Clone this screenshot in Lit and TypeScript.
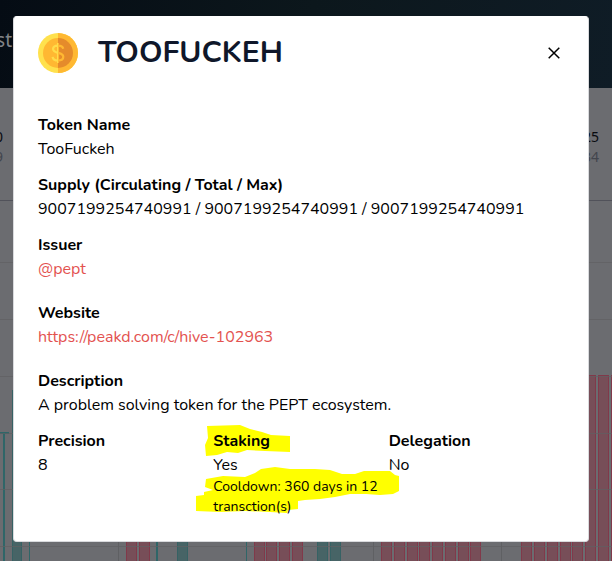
import { LitElement, html, svg, css } from "lit";
import { customElement } from "lit/decorators.js";

const GRID_ROWS = [62, 119, 176, 233, 289, 346];
const GRID_COLUMNS = [118, 373, 501];
type Bar = { x: number; w: number; top: number; tone: string };
const run = (xs: number[], w: number, top: number, tone: string): Bar[] =>
  xs.map((x) => ({ x, w, top, tone }));
const BARS: Bar[] = [
  ...run([12], 10, 190, "teal"),
  ...run([177, 317, 330], 11, 300, "teal"),
  ...run([126, 139, 254, 266, 279, 292], 11, 300, "red"),
  ...run([381, 394, 407, 419, 432, 445, 458, 470], 11, 300, "red"),
  ...run([521, 534, 547, 560, 572], 11, 300, "red"),
  ...run([585, 598, 611, 624, 637], 11, 175, "red"),
];
const THIN = [
  { x: 3, w: 2, top: 233 },
  { x: 29, w: 1, top: 300 },
  { x: 156, w: 2, top: 300 },
  { x: 246, w: 1, top: 300 },
];

@customElement("market-page")
export class MarketPage extends LitElement {
  static styles = css`
    :host {
      display: flex;
      flex-direction: column;
      min-height: 100vh;
      background: #6b6c70;
      overflow: hidden;
      font-family: "Noto Sans", "Open Sans", sans-serif;
    }
    .top {
      height: 88px;
      box-sizing: border-box;
      padding-top: 26px;
      background: linear-gradient(100deg, #050c14, #0c171c 50%, #0f1c26);
      color: #808387;
      font-size: 19px;
      line-height: 28px;
    }
    .cut {
      display: flex;
      justify-content: flex-end;
      white-space: nowrap;
    }
    .nav {
      width: 12px;
    }
    .stats {
      display: flex;
      justify-content: space-between;
      height: 112px;
      box-sizing: border-box;
      padding: 39px 13px 0 0;
      font-size: 14px;
      line-height: 20px;
      color: #080a0f;
    }
    .first {
      width: 3px;
    }
    .stat {
      text-align: right;
    }
    .dim {
      color: #42454d;
    }
    .chart {
      display: block;
      width: 100%;
      flex: 1 0 361px;
    }
    .grid {
      fill: #5f6063;
    }
    .axis {
      fill: #51525a;
    }
    .teal {
      fill: #476466;
      stroke: #366264;
    }
    .thin {
      fill: #2f6668;
    }
    .red {
      fill: #774e58;
      stroke: #81394a;
    }
  `;
  render() {
    return html`
      <div class="top"><div class="cut nav">st</div></div>
      <div class="stats">
        <div class="cut first"><div class="stat">0<br /><span class="dim">9</span></div></div>
        <div class="stat">0.25<br /><span class="dim">0.34</span></div>
      </div>
      <svg class="chart" aria-hidden="true">
        ${GRID_COLUMNS.map((x) => svg`<rect class="grid" x=${x} y="0" width="1" height="100%" />`)}
        ${BARS.map(
          (b) => svg`<rect class=${b.tone} x=${b.x + 0.5} y=${b.top + 0.5} width=${b.w - 1} height="900" />`
        )}
        ${THIN.map((b) => svg`<rect class="thin" x=${b.x} y=${b.top} width=${b.w} height="900" />`)}
        <rect class="thin" x="0" y="232" width="9" height="2" />
        ${GRID_ROWS.map((y) => svg`<rect class="grid" x="0" y=${y} width="100%" height="1" opacity="0.7" />`)}
        <rect class="axis" x="0" y="0" width="100%" height="1" />
      </svg>
    `;
  }
}

@customElement("token-dialog")
export class TokenDialog extends LitElement {
  static styles = css`
    :host {
      display: block;
      box-sizing: border-box;
      width: 100%;
      max-width: 576px;
      padding: 16px 24px 24px;
      background: #fff;
      border: 1px solid #d9dadd;
      border-top-color: #fff;
      border-radius: 4px;
      color: #000;
      font: 16px/24px Nunito, "Noto Sans", sans-serif;
    }
    header {
      display: flex;
      align-items: center;
      height: 40px;
      margin-bottom: 40px;
    }
    .coin {
      width: 40px;
      height: 40px;
      margin-right: 20px;
    }
    h2 {
      flex: 1;
      margin: 0;
      font-size: 30px;
      line-height: 40px;
      font-weight: 700;
      color: #0f172a;
    }
    .close {
      display: flex;
      align-items: center;
      justify-content: center;
      width: 20px;
      height: 40px;
      padding: 0;
      border: 0;
      background: none;
      color: #000;
    }
    dl,
    dd {
      margin: 0;
    }
    .item {
      margin-bottom: 12px;
    }
    .spaced {
      margin-bottom: 20px;
    }
    dt {
      font-weight: 700;
    }
    a {
      color: #e3524f;
      text-decoration: none;
    }
    .columns {
      display: grid;
      grid-template-columns: repeat(3, 1fr);
    }
    .column {
      position: relative;
    }
    .column dt,
    .column dd {
      position: relative;
    }
    .marker {
      position: absolute;
      left: -23px;
      top: -9px;
      width: 220px;
      height: 100px;
      fill: #ff0;
    }
    .note {
      font-size: 14px;
      line-height: 20px;
    }
  `;
  render() {
    return html`
      <header>
        <svg class="coin" viewBox="0 0 40 40" aria-hidden="true">
          <circle cx="20" cy="20" r="20" fill="#ffe14d" />
          <path d="M20 0a20 20 0 0 1 0 40z" fill="#ffb832" />
          <circle cx="20" cy="20" r="15" fill="#ffb832" />
          <path d="M20 5a15 15 0 0 1 0 30z" fill="#e58b2b" />
          <path
            d="M25.200 15.800C24.800 13.500 22.800 12.600 20 12.600c-3 0-4.900 1.300-4.900 3.500 0 5 10.200 2.600 10.200 7.600 0 2.500-2.200 3.800-5.300 3.800-3.200 0-5.100-1.200-5.400-3.700M20 10v20"
            fill="none"
            stroke="#ffb832"
            stroke-width="2.2"
          />
          <g fill="none" stroke="#ffdc4a" stroke-width="2.200">
            <path d="M20 12.600c-3 0-4.900 1.300-4.900 3.500 0 2.500 2.500 3.200 4.900 3.800M20 27.500c-3.200 0-5.100-1.200-5.400-3.700" />
          </g>
          <path d="M19 10h1v20h-1z" fill="#ffdc4a" />
        </svg>
        <h2>TOOFUCKEH</h2>
        <button class="close" aria-label="Close">
          <svg width="12" height="12" viewBox="0 0 12 12" aria-hidden="true">
            <path d="M.7.7l10.600 10.600M11.300.7L.7 11.300" stroke="currentColor" stroke-width="1.500" />
          </svg>
        </button>
      </header>
      <dl>
        <div class="item"><dt>Token Name</dt><dd>TooFuckeh</dd></div>
        <div class="item">
          <dt>Supply (Circulating / Total / Max)</dt>
          <dd>9007199254740991 / 9007199254740991 / 9007199254740991</dd>
        </div>
        <div class="item spaced"><dt>Issuer</dt><dd><a href="#pept">@pept</a></dd></div>
        <div class="item spaced">
          <dt>Website</dt>
          <dd><a href="https://peakd.com/c/hive-102963">https://peakd.com/c/hive-102963</a></dd>
        </div>
        <div class="item"><dt>Description</dt><dd>A problem solving token for the PEPT ecosystem.</dd></div>
      </dl>
      <dl class="columns">
        <div class="column"><dt>Precision</dt><dd>8</dd></div>
        <div class="column">
          <svg class="marker" viewBox="0 0 220 100" aria-hidden="true">
            <path
              d="M17 6 50 5 60 9 72 12 81 15 100 16V32L75 31 57 30 48 33 37 32 27 35 16 36 15 25 18 18z"
            />
            <path
              d="M16 59 33 56 55 57 65 53 71 49 85 47 100 49 125 49 140 50 152 54 165 54 174 51 200 51 205 55 209 56V71L203 74 190 75 176 74 160 74 145 77 130 79 115 80 108 81V89L98 90 97 93 80 92 55 91 30 92 6 91V76L14 75V72L23 70 15 67z"
            />
          </svg>
          <dt>Staking</dt>
          <dd>Yes</dd>
          <dd class="note">Cooldown: 360 days in 12 transction(s)</dd>
        </div>
        <div class="column"><dt>Delegation</dt><dd>No</dd></div>
      </dl>
    `;
  }
}

@customElement("app-root")
export class AppRoot extends LitElement {
  static styles = css`
    :host {
      display: block;
      position: relative;
      min-height: 100vh;
    }
    .overlay {
      position: absolute;
      inset: 0;
      display: flex;
      justify-content: center;
      align-items: flex-start;
      padding: 16px 23px 16px 13px;
    }
  `;
  render() {
    return html`
      <market-page></market-page>
      <div class="overlay">
        <token-dialog role="dialog" aria-modal="true" aria-label="TOOFUCKEH"></token-dialog>
      </div>
    `;
  }
}
